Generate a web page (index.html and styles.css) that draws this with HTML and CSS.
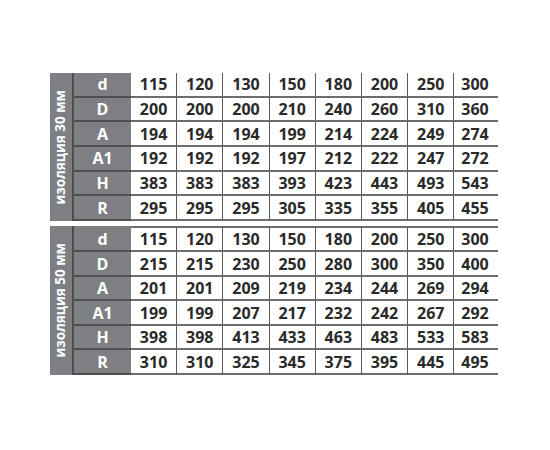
FILE: index.html
```html
<!DOCTYPE html>
<html lang="ru">
<head>
<meta charset="utf-8">
<link rel="stylesheet" href="styles.css">
</head>
<body>
<div class="page">
  <div class="block first">
    <div class="label"><span>изоляция 30 мм</span></div>
    <div class="grid">
      <div class="key">d</div><div class="v">115</div><div class="v">120</div><div class="v">130</div><div class="v">150</div><div class="v">180</div><div class="v">200</div><div class="v">250</div><div class="v last">300</div>
      <div class="key">D</div><div class="v">200</div><div class="v">200</div><div class="v">200</div><div class="v">210</div><div class="v">240</div><div class="v">260</div><div class="v">310</div><div class="v last">360</div>
      <div class="key">A</div><div class="v">194</div><div class="v">194</div><div class="v">194</div><div class="v">199</div><div class="v">214</div><div class="v">224</div><div class="v">249</div><div class="v last">274</div>
      <div class="key">A1</div><div class="v">192</div><div class="v">192</div><div class="v">192</div><div class="v">197</div><div class="v">212</div><div class="v">222</div><div class="v">247</div><div class="v last">272</div>
      <div class="key">H</div><div class="v">383</div><div class="v">383</div><div class="v">383</div><div class="v">393</div><div class="v">423</div><div class="v">443</div><div class="v">493</div><div class="v last">543</div>
      <div class="key">R</div><div class="v">295</div><div class="v">295</div><div class="v">295</div><div class="v">305</div><div class="v">335</div><div class="v">355</div><div class="v">405</div><div class="v last">455</div>
    </div>
  </div>
  <div class="block second">
    <div class="label"><span>изоляция 50 мм</span></div>
    <div class="grid">
      <div class="key">d</div><div class="v">115</div><div class="v">120</div><div class="v">130</div><div class="v">150</div><div class="v">180</div><div class="v">200</div><div class="v">250</div><div class="v last">300</div>
      <div class="key">D</div><div class="v">215</div><div class="v">215</div><div class="v">230</div><div class="v">250</div><div class="v">280</div><div class="v">300</div><div class="v">350</div><div class="v last">400</div>
      <div class="key">A</div><div class="v">201</div><div class="v">201</div><div class="v">209</div><div class="v">219</div><div class="v">234</div><div class="v">244</div><div class="v">269</div><div class="v last">294</div>
      <div class="key">A1</div><div class="v">199</div><div class="v">199</div><div class="v">207</div><div class="v">217</div><div class="v">232</div><div class="v">242</div><div class="v">267</div><div class="v last">292</div>
      <div class="key">H</div><div class="v">398</div><div class="v">398</div><div class="v">413</div><div class="v">433</div><div class="v">463</div><div class="v">483</div><div class="v">533</div><div class="v last">583</div>
      <div class="key">R</div><div class="v">310</div><div class="v">310</div><div class="v">325</div><div class="v">345</div><div class="v">375</div><div class="v">395</div><div class="v">445</div><div class="v last">495</div>
    </div>
  </div>
</div>
</body>
</html>
```
FILE: styles.css
```css
* { box-sizing: border-box; }
html, body { margin: 0; padding: 0; background: #fff; }
body { font-family: "Open Sans", "DejaVu Sans", sans-serif; }
.page {
  padding: 73px 0 0 50px;
  display: flex;
  flex-direction: column;
  gap: 5px;
}
.block {
  display: flex;
  width: 448px;
}
.label {
  width: 24px;
  flex: none;
  background: #7e7f83;
  border-right: 2px solid #4e4e50;
  display: flex;
  align-items: center;
  justify-content: center;
}
.label span {
  writing-mode: vertical-rl;
  transform: rotate(180deg);
  color: #fff;
  font-weight: 700;
  font-size: 13.5px;
  white-space: nowrap;
  line-height: 1;
}
.grid {
  flex: 1;
  display: grid;
  grid-template-columns: 57px repeat(7, 46.2px) 1fr;
  grid-template-rows: repeat(6, 24.67px);
}
.second .grid {
  grid-template-rows: 26.5px repeat(5, 24.5px);
}
.key, .v {
  display: flex;
  align-items: center;
  justify-content: center;
  font-weight: 700;
  font-size: 16px;
  line-height: 1;
}
.key {
  background: #7e7f83;
  color: #fff;
  border-bottom: 2px solid #4e4e50;
}
.v {
  color: #2a2a2a;
  border-bottom: 2px solid #6d6d6d;
  border-right: 1.5px solid #5a5a5a;
}
.v.last {
  border-right: none;
  justify-content: flex-start;
  padding-left: 7px;
}
.second .grid > :nth-child(-n+9) {
  border-top: 2px solid #6d6d6d;
}
.second .grid > .key:first-child {
  border-top-color: #7e7f83;
}
```
